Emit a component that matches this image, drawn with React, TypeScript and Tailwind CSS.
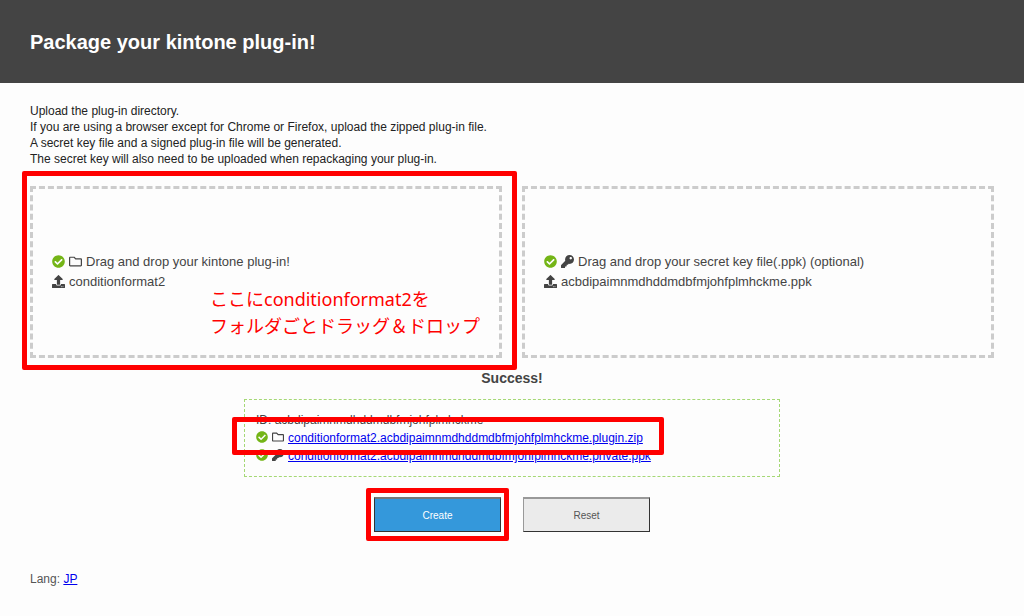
import type { ReactNode } from "react"
import { FaCheckCircle, FaKey, FaRegFolder, FaUpload } from "react-icons/fa"

const PLUGIN_ID = "acbdipaimnmdhddmdbfmjohfplmhckme"

function Highlight({ className }: { className: string }) {
  return <div aria-hidden="true" className={`pointer-events-none absolute rounded-xs border-5 border-[#ff0000] ${className}`} />
}

function DropZone({ icon, label, fileName, children }: {
  icon: ReactNode
  label: string
  fileName: string
  children?: ReactNode
}) {
  return (
    <section className="relative flex-1">
      <div className="flex h-43 flex-col justify-center border-3 border-dashed border-[#cccccc] px-[19px] text-[13px] leading-5 [&_svg]:mb-0.5">
        <p className="flex items-center gap-1">
          <FaCheckCircle className="text-[#74b517]" />
          {icon}
          {label}
        </p>
        <p className="flex items-center gap-1">
          <FaUpload />
          {fileName}
        </p>
      </div>
      {children}
    </section>
  )
}

export default function App() {
  return (
    <div className="min-h-screen bg-[#fdfdfd] font-['Liberation_Sans',Arial,sans-serif] text-[#444444]">
      <header className="bg-[#444444] px-[30px] pt-7 pb-[27px]">
        <h1 className="text-xl leading-7 font-bold text-white">Package your kintone plug-in!</h1>
      </header>

      <main className="px-[30px] pt-5">
        <p className="text-xs leading-4 text-[#222222]">
          Upload the plug-in directory.<br />
          If you are using a browser except for Chrome or Firefox, upload the zipped plug-in file.<br />
          A secret key file and a signed plug-in file will be generated.<br />
          The secret key will also need to be uploaded when repackaging your plug-in.
        </p>

        <div className="mt-[19px] flex gap-5">
          <DropZone icon={<FaRegFolder />} label="Drag and drop your kintone plug-in!" fileName="conditionformat2">
            <Highlight className="-top-[15px] -right-[15px] -bottom-3 -left-2" />
            <p className="absolute top-[100px] left-[180px] font-['Noto_Sans','Noto_Sans_CJK_JP',sans-serif] text-lg leading-[27px] whitespace-nowrap text-[#ff0000]">
              ここにconditionformat2を<br />
              フォルダごとドラッグ＆ドロップ
            </p>
          </DropZone>
          <DropZone icon={<FaKey />} label="Drag and drop your secret key file(.ppk) (optional)" fileName={`${PLUGIN_ID}.ppk`} />
        </div>

        <h2 className="mt-2.5 text-center text-sm leading-5 font-bold">Success!</h2>

        <div className="relative mx-auto mt-[11px] max-w-[536px] border border-dashed border-[#a5d875] p-[11px] text-xs leading-[18px] [&_svg]:mb-0.5">
          <p>ID: {PLUGIN_ID}</p>
          <p className="flex items-center gap-1">
            <FaCheckCircle className="text-[#74b517]" />
            <FaRegFolder />
            <a href="#plugin" className="text-[#0000ee] underline">conditionformat2.{PLUGIN_ID}.plugin.zip</a>
          </p>
          <p className="flex items-center gap-1">
            <FaCheckCircle className="text-[#74b517]" />
            <FaKey />
            <a href="#ppk" className="text-[#0000ee] underline">conditionformat2.{PLUGIN_ID}.private.ppk</a>
          </p>
          <Highlight className="top-[17px] right-[115px] -left-[13px] h-[38px]" />
        </div>

        <div className="mt-5 flex justify-center gap-[22px] text-[10px]">
          <div className="relative">
            <button type="button" className="h-[35px] w-[127px] border border-t-2 border-[#333333] border-t-[#777777] bg-[#3498db] text-white">
              Create
            </button>
            <Highlight className="-inset-x-2 -inset-y-[9px]" />
          </div>
          <button type="button" className="h-[35px] w-[127px] border border-t-2 border-[#333333] border-t-[#999999] border-l-[#999999] bg-[#ebebeb] text-[#555555]">
            Reset
          </button>
        </div>
      </main>

      <footer className="px-[30px] pt-[38px] pb-5 text-xs leading-[18px] text-[#555555]">
        Lang: <a href="#jp" className="text-[#0000ee] underline">JP</a>
      </footer>
    </div>
  )
}
